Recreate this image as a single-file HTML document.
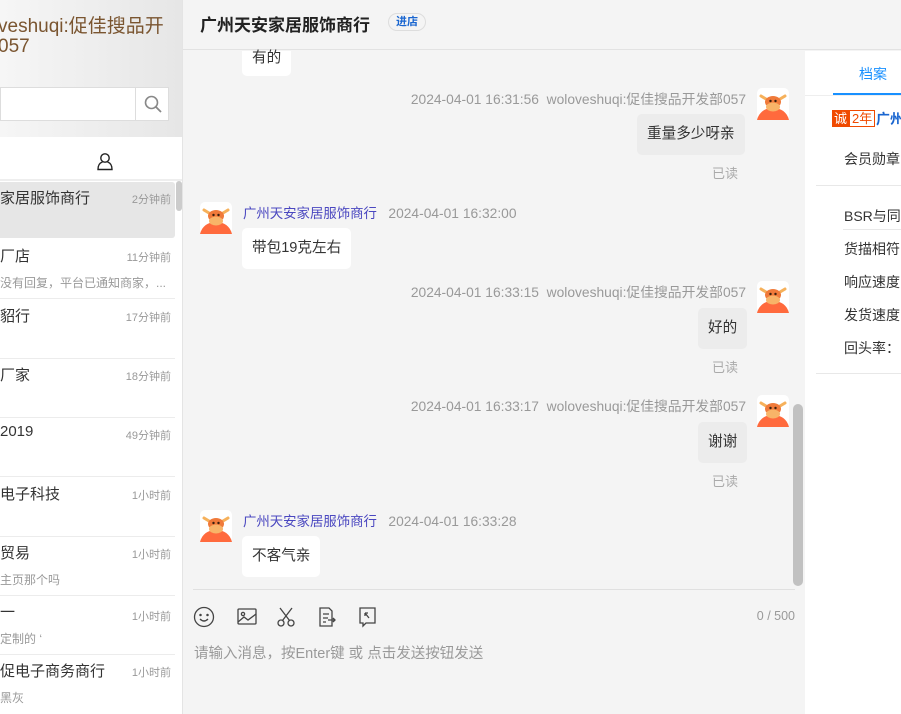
<!DOCTYPE html>
<html><head><meta charset="utf-8"><style>
*{margin:0;padding:0;box-sizing:border-box}
body{width:901px;height:714px;overflow:hidden;position:relative;background:#f4f4f4;font-family:"Liberation Sans","Noto Sans CJK SC",sans-serif;color:#333}
.a{position:absolute;white-space:nowrap}
.left{position:absolute;left:0;top:0;width:183px;height:714px;background:#fff;border-right:1px solid #e4e4e4}
.lh{position:absolute;left:0;top:0;width:182px;height:137px;background:linear-gradient(90deg,#f6f6f6,#e6e6e6)}
.item{position:absolute;left:0;width:175px;height:59px;border-bottom:1px solid #ececec}
.item .n{position:absolute;left:0;top:5px;font-size:15px;color:#333}
.item .t{position:absolute;right:4px;top:9px;font-size:11px;color:#999}
.item .s{position:absolute;left:0;top:34px;font-size:12px;color:#999}
.bub{position:absolute;background:#fff;border-radius:5px;font-size:14.6px;color:#333;padding:0 10px;line-height:41px;height:41px}
.bub.r{background:#ececec}
.meta{position:absolute;font-size:13.8px;color:#999;white-space:nowrap}
.read{position:absolute;font-size:13px;color:#aaa}
.av{position:absolute;width:32px;height:32px}
.rp div{position:absolute;font-size:14px;color:#333;white-space:nowrap}
</style></head><body>
<svg width="0" height="0" style="position:absolute"><defs><g id="bull"><rect x="0" y="0" width="32" height="32" rx="5" fill="#fff"/><path d="M0 32 C2 24 8 20 16 20 C24 20 30 24 32 32Z" fill="#ff6a3d"/><path d="M4 8 L9 11 M28 8 L23 11" stroke="#f6b15b" stroke-width="3" stroke-linecap="round"/><ellipse cx="16" cy="14" rx="8" ry="6" fill="#f07a3a"/><ellipse cx="16" cy="19" rx="7" ry="4.5" fill="#f8b468"/><circle cx="13.5" cy="13" r="1.2" fill="#3a2010"/><circle cx="18.5" cy="13" r="1.2" fill="#3a2010"/></g></defs></svg>

<div class="left">
 <div class="lh">
  <div class="a" style="left:-2px;top:11px;font-size:19px;color:#7a5530">veshuqi:促佳搜品开</div>
  <div class="a" style="left:-2px;top:36px;font-size:19px;color:#7a5530">057</div>
  <div class="a" style="left:0;top:87px;width:169px;height:34px;background:#fff;border:1px solid #ddd"></div>
  <div class="a" style="left:135px;top:87px;width:1px;height:34px;background:#ddd"></div>
  <svg class="a" style="left:143px;top:94px" width="20" height="20" viewBox="0 0 20 20"><circle cx="8.5" cy="8.5" r="6" fill="none" stroke="#888" stroke-width="1.6"/><path d="M13 13 L18 18" stroke="#888" stroke-width="1.8"/></svg>
 </div>
 <div class="a" style="left:0;top:137px;width:182px;height:44px;border-bottom:2px solid #eee"></div>
 <svg class="a" style="left:96px;top:152px" width="18" height="19" viewBox="0 0 18 19"><circle cx="9" cy="6" r="4.2" fill="none" stroke="#222" stroke-width="1.4"/><path d="M6.5 10 C3 11 2 14 2 17.5 H16 C16 14 15 11 11.5 10" fill="none" stroke="#222" stroke-width="1.4"/></svg>
 <div class="item" style="top:182px;height:56px;background:#e6e6e6;border-radius:0 3px 3px 0;border:none"><div class="n">家居服饰商行</div><div class="t">2分钟前</div></div>
 <div class="a" style="left:176px;top:181px;width:6px;height:30px;background:#ccc;border-radius:3px"></div>
 <div class="item" style="top:240px"><div class="n">厂店</div><div class="t">11分钟前</div><div class="s">没有回复，平台已通知商家，...</div></div>
 <div class="item" style="top:300px"><div class="n">貂行</div><div class="t">17分钟前</div></div>
 <div class="item" style="top:359px"><div class="n">厂家</div><div class="t">18分钟前</div></div>
 <div class="item" style="top:418px"><div class="n">2019</div><div class="t">49分钟前</div></div>
 <div class="item" style="top:478px"><div class="n">电子科技</div><div class="t">1小时前</div></div>
 <div class="item" style="top:537px"><div class="n">贸易</div><div class="t">1小时前</div><div class="s">主页那个吗</div></div>
 <div class="item" style="top:596px"><div class="n">一</div><div class="t" style="top:12px">1小时前</div><div class="s">定制的 ‘</div></div>
 <div class="item" style="top:655px;border:none"><div class="n">促电子商务商行</div><div class="t">1小时前</div><div class="s">黑灰</div></div>
</div>

<div class="a" style="left:183px;top:0;width:718px;height:50px;background:#f4f4f4;border-bottom:1px solid #e2e2e2"></div>
<div class="a" style="left:200px;top:11px;font-size:17px;font-weight:bold;color:#222">广州天安家居服饰商行</div>
<div class="a" style="left:388px;top:13px;width:38px;height:18px;border:1px solid #ddd;border-radius:9px;font-size:11px;color:#1a66d0;text-align:center;line-height:16px;font-weight:bold">进店</div>

<div class="bub" style="left:242px;top:51px;height:25px;line-height:14px;border-radius:0 0 5px 5px">有的</div>

<div class="meta" style="right:155px;top:88px">2024-04-01 16:31:56&nbsp;&nbsp;woloveshuqi:促佳搜品开发部057</div>
<svg class="av" style="left:757px;top:88px"><use href="#bull"/></svg>
<div class="bub r" style="left:637px;top:114px">重量多少呀亲</div>
<div class="read" style="left:712px;top:163px">已读</div>

<svg class="av" style="left:200px;top:202px"><use href="#bull"/></svg>
<div class="meta" style="left:243px;top:202px"><span style="color:#4a47c0;font-size:13.4px">广州天安家居服饰商行</span>&nbsp;&nbsp;&nbsp;2024-04-01 16:32:00</div>
<div class="bub" style="left:242px;top:228px">带包19克左右</div>

<div class="meta" style="right:155px;top:281px">2024-04-01 16:33:15&nbsp;&nbsp;woloveshuqi:促佳搜品开发部057</div>
<svg class="av" style="left:757px;top:281px"><use href="#bull"/></svg>
<div class="bub r" style="left:698px;top:308px">好的</div>
<div class="read" style="left:712px;top:357px">已读</div>

<div class="meta" style="right:155px;top:395px">2024-04-01 16:33:17&nbsp;&nbsp;woloveshuqi:促佳搜品开发部057</div>
<svg class="av" style="left:757px;top:395px"><use href="#bull"/></svg>
<div class="bub r" style="left:698px;top:422px">谢谢</div>
<div class="read" style="left:712px;top:471px">已读</div>

<svg class="av" style="left:200px;top:510px"><use href="#bull"/></svg>
<div class="meta" style="left:243px;top:510px"><span style="color:#4a47c0;font-size:13.4px">广州天安家居服饰商行</span>&nbsp;&nbsp;&nbsp;2024-04-01 16:33:28</div>
<div class="bub" style="left:242px;top:536px">不客气亲</div>

<div class="a" style="left:793px;top:404px;width:10px;height:182px;background:#c1c1c1;border-radius:5px"></div>
<div class="a" style="left:806px;top:392px;width:13px;height:32px;background:#ececec;border-radius:0 4px 4px 0;font-size:13px;color:#888;line-height:32px;text-align:center">»</div>
<div class="a" style="left:193px;top:589px;width:602px;height:1px;background:#e0e0e0"></div>

<svg class="a" style="left:193px;top:605px" width="200" height="24" viewBox="0 0 200 24" fill="none" stroke="#444" stroke-width="1.3">
 <circle cx="11" cy="12" r="9.5"/><circle cx="7.5" cy="10" r="0.6" fill="#444"/><circle cx="14.5" cy="10" r="0.6" fill="#444"/><path d="M7 14 Q11 18 15 14"/>
 <rect x="45" y="4" width="18" height="15" rx="1"/><circle cx="50" cy="9" r="1.6"/><path d="M45 17 L51 12 L55 15 L63 9"/>
 <circle cx="88" cy="18" r="3"/><circle cx="98" cy="18" r="3"/><path d="M89.5 15.5 L99 3 M96.5 15.5 L87 3"/>
 <path d="M127 3 H136 L139 6 V21 H127 Z M130 9 H136 M130 13 H135 M130 17 H133 M135 15 H142 M140 13 L142 15 L140 17"/>
 <path d="M167 3 H182 V18 H173 L170 21 V18 H167 Z M172 8 L176 13 M172 8 V11 M172 8 H175"/>
</svg>
<div class="a" style="right:106px;top:609px;font-size:12.5px;color:#999">0 / 500</div>
<div class="a" style="left:194px;top:642px;font-size:14.5px;color:#999">请输入消息，按Enter键 或 点击发送按钮发送</div>

<div class="a rp" style="left:805px;top:51px;width:96px;height:663px;background:#fff">
 <div style="left:0;top:44px;width:96px;height:1px;background:#eee"></div>
 <div style="left:54px;top:13px;font-size:14px;color:#1890ff">档案</div>
 <div style="left:28px;top:42px;width:68px;height:2px;background:#1890ff"></div>
 <div style="left:27px;top:59px;height:17px;font-size:13px;line-height:15px"><span style="display:inline-block;background:#f04a00;color:#fff;padding:1px 2px">诚</span><span style="display:inline-block;border:1px solid #f04a00;color:#f04a00;padding:0 2px">2年</span></div>
 <div style="left:71px;top:58px;font-size:14px;color:#1a66d0;font-weight:bold">广州</div>
 <div style="left:39px;top:98px">会员勋章</div>
 <div style="left:11px;top:134px;width:85px;height:1px;background:#e8e8e8"></div>
 <div style="left:39px;top:155px">BSR与同</div>
 <div style="left:38px;top:178px;width:58px;height:1px;background:#e8e8e8"></div>
 <div style="left:39px;top:188px">货描相符</div>
 <div style="left:39px;top:221px">响应速度</div>
 <div style="left:39px;top:254px">发货速度</div>
 <div style="left:39px;top:287px">回头率：</div>
 <div style="left:11px;top:322px;width:85px;height:1px;background:#e8e8e8"></div>
</div>
</body></html>
